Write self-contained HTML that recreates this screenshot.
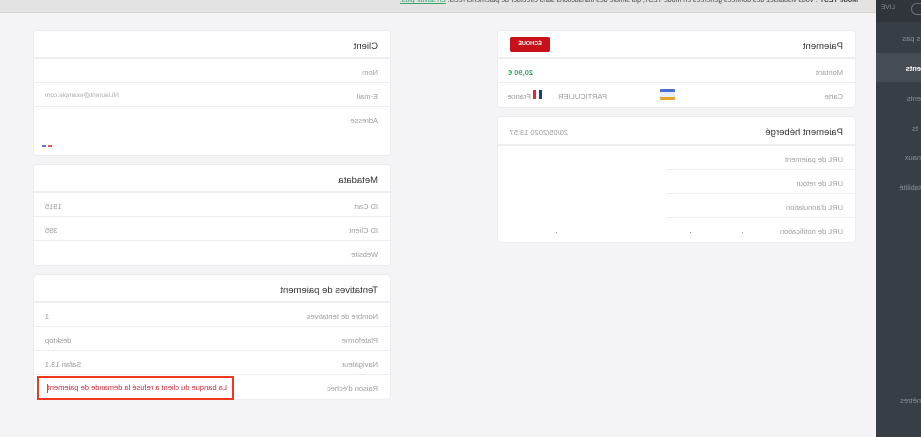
<!DOCTYPE html>
<html><head><meta charset="utf-8"><style>
*{margin:0;padding:0;box-sizing:border-box}
html,body{width:921px;height:437px;overflow:hidden;background:#f4f4f6;font-family:"Liberation Sans",sans-serif}
#w{position:absolute;left:0;top:0;width:921px;height:437px;transform:scaleX(-1);transform-origin:center;overflow:hidden;background:#f4f4f6}
.a{position:absolute}
.side{left:0;top:0;width:45px;height:437px;background:#383e46;overflow:hidden}
.si{position:absolute;font-size:7.5px;color:#8a9099;white-space:nowrap}
.banner{left:45px;top:0;width:876px;height:13px;background:#e3e3e3;border-bottom:1px solid #d4d4d4;overflow:hidden}
.card{position:absolute;background:#fff;border-radius:3px;box-shadow:0 0 1px rgba(0,0,0,.18)}
.hd{height:28px;border-bottom:2px solid #eeeef0;font-size:9.5px;color:#333;padding:10px 12px 0}
.row{position:relative;height:24px;border-bottom:1px solid #ededed;font-size:7.5px;color:#a0a0a0;padding:9px 12px 0}
.row:last-child{border-bottom:none}
.v{position:absolute;right:11px;top:9px;color:#999}
</style></head><body><div id="w">
<div class="a side">
 <div class="a" style="left:0;top:0;width:45px;height:22px;background:#30353c"></div>
 <div class="a" style="left:-12px;top:3px;width:22px;height:12px;border:1px solid #6a7079;border-radius:7px"></div>
 <div class="si" style="left:26px;top:4px;font-size:6.5px">LIVE</div>
 <div class="si" style="left:-6px;top:34px">ers pas</div>
 <div class="a" style="left:0;top:53px;width:45px;height:29px;background:#464c54"></div>
 <div class="si" style="left:0;top:64px;color:#fff;font-weight:bold">ents</div>
 <div class="si" style="left:0;top:94px">ents</div>
 <div class="si" style="left:3px;top:124px">ts</div>
 <div class="si" style="left:0;top:153px">naux</div>
 <div class="si" style="left:0;top:183px">tabilité</div>
 <div class="si" style="left:0;top:396px">nètres</div>
</div>
<div class="a banner"><div class="a" style="left:18px;top:-3px;font-size:7px;color:#444;white-space:nowrap"><b>Mode TEST</b> : Vous visualisez des données générées en mode TEST, qui simule des transactions sans effectuer de paiements réels. <span style="color:#3aa76d;text-decoration:underline">En savoir plus.</span></div></div>

<div class="card" style="left:66px;top:31px;width:357px;height:76px">
 <div class="hd">Paiement</div>
 <div class="a" style="left:305px;top:6px;width:40px;height:15px;background:#c8101a;border-radius:2px;color:#fff;font-size:5.5px;font-weight:bold;text-align:center;line-height:15px">ÉCHOUÉ</div>
 <div class="row">Montant<span class="v" style="color:#3aa76d;font-weight:bold;right:10px">20,90 €</span></div>
 <div class="row">Carte
  <div class="a" style="left:180px;top:6px;width:15px;height:11px;border-radius:1px;background:linear-gradient(#4a6fd0 0 28%,#e8eef8 28% 72%,#e2a72a 72%)"></div>
  <span class="a" style="left:248px;top:9px;color:#999">PARTICULIER</span>
  <span class="a" style="left:313px;top:7px;width:9px;height:9px;background:linear-gradient(90deg,#1a3b9a 33%,#fff 33% 66%,#e22 66%)"></span>
  <span class="a" style="left:324px;top:9px;color:#999">France</span>
 </div>
</div>

<div class="card" style="left:66px;top:117px;width:357px;height:125px">
 <div class="hd" style="height:29px">Paiement hébergé<span class="a" style="left:287px;top:11px;font-size:7.5px;color:#999">20/05/2020 13:57</span></div>
 <div class="row" style="border-bottom:none">URL de paiement<div class="a" style="left:0;bottom:0;width:189px;border-bottom:1px solid #ededed"></div></div>
 <div class="row" style="border-bottom:none">URL de retour<div class="a" style="left:0;bottom:0;width:189px;border-bottom:1px solid #ededed"></div></div>
 <div class="row" style="border-bottom:none">URL d'annulation<div class="a" style="left:0;bottom:0;width:189px;border-bottom:1px solid #ededed"></div></div>
 <div class="row">URL de notification
  <span class="a" style="left:112px;top:14px;width:1px;height:1px;background:#999"></span>
  <span class="a" style="left:164px;top:14px;width:1px;height:1px;background:#999"></span>
  <span class="a" style="left:298px;top:14px;width:1px;height:1px;background:#999"></span>
 </div>
</div>

<div class="card" style="left:531px;top:31px;width:356px;height:124px">
 <div class="hd">Client</div>
 <div class="row">Nom</div>
 <div class="row">E-mail<span class="v" style="color:#aaa;font-size:6.5px">hfi.laurent@example.com</span></div>
 <div class="row" style="height:48px">Adresse
  <span class="a" style="right:14px;top:38px;width:4px;height:2px;background:#e55"></span>
  <span class="a" style="right:8px;top:38px;width:4px;height:2px;background:#57c"></span>
 </div>
</div>

<div class="card" style="left:531px;top:165px;width:356px;height:100px">
 <div class="hd">Metadata</div>
 <div class="row">ID Cart<span class="v">1915</span></div>
 <div class="row">ID Client<span class="v">395</span></div>
 <div class="row">Website</div>
</div>

<div class="card" style="left:531px;top:275px;width:356px;height:124px">
 <div class="hd">Tentatives de paiement</div>
 <div class="row">Nombre de tentatives<span class="v">1</span></div>
 <div class="row">Plateforme<span class="v">desktop</span></div>
 <div class="row">Navigateur<span class="v">Safari 13.1</span></div>
 <div class="row">Raison d'échec</div>
</div>
<div class="a" style="left:687px;top:376px;width:197px;height:24px;border:2px solid #f0391f"></div>
<div class="a" style="left:694px;top:383px;font-size:7.5px;color:#d12a3a;white-space:nowrap">La banque du client a refusé la demande de paiement<span style="display:inline-block;width:1px;height:9px;background:#3b6fe0;vertical-align:middle"></span></div>
</div></body></html>
